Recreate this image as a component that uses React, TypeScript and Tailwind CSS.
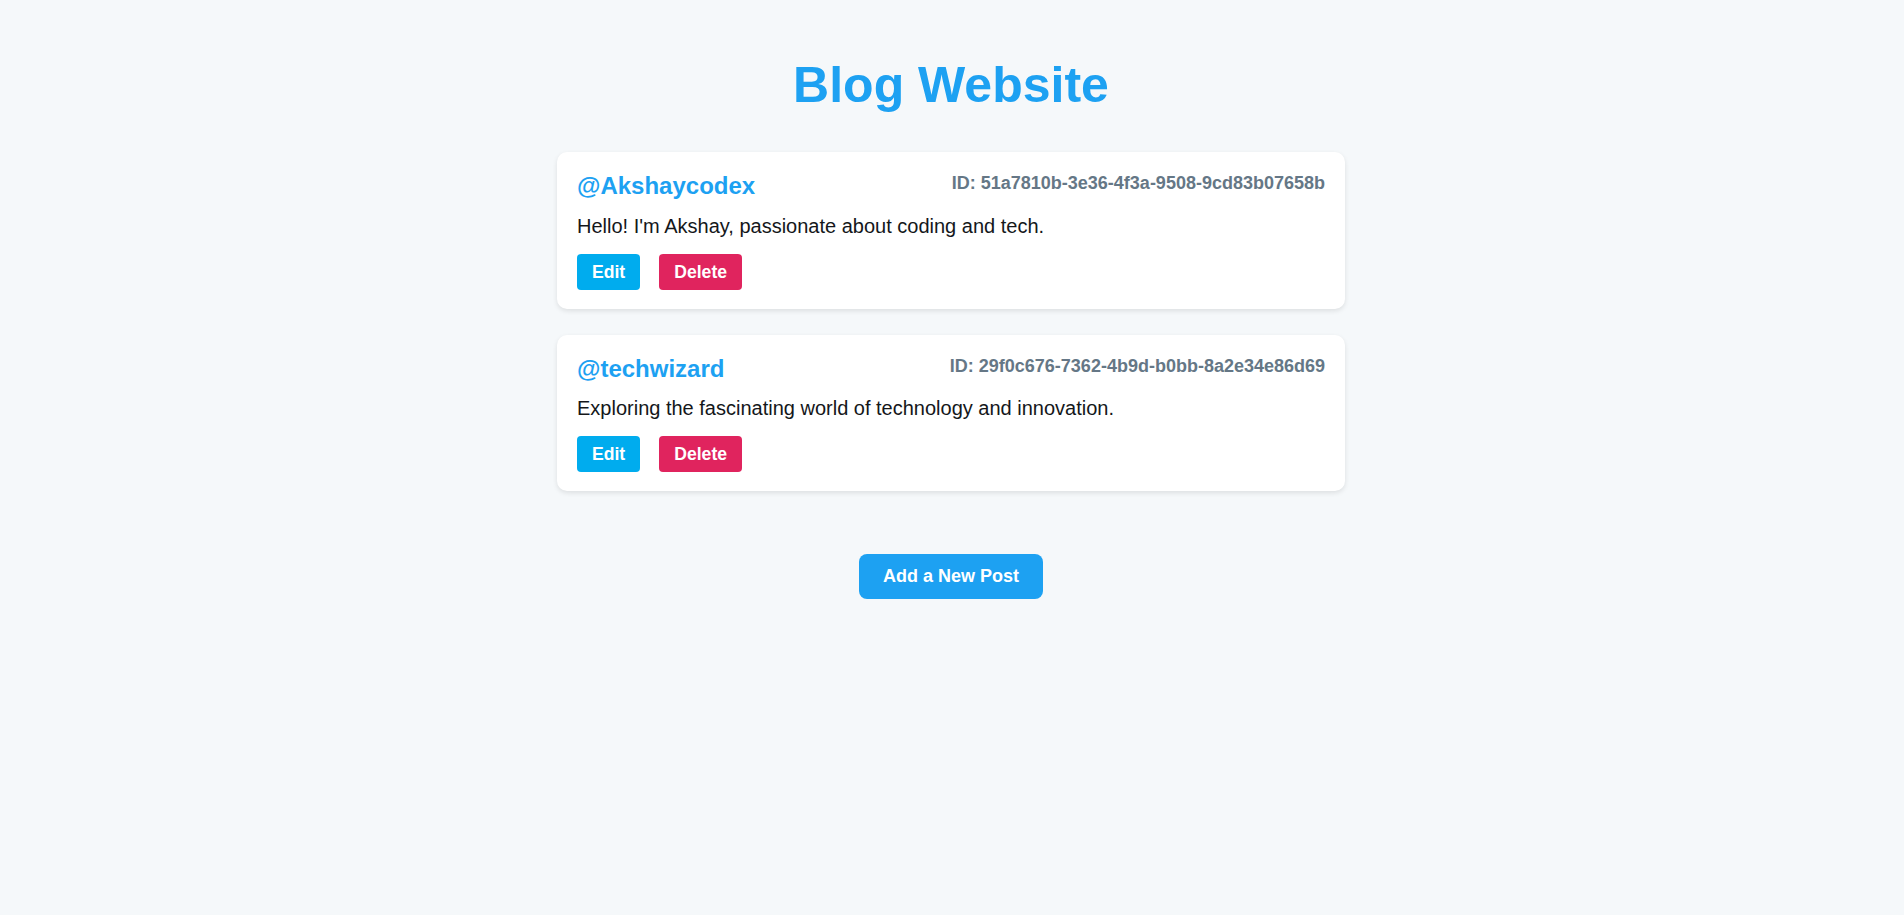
import React from "react"

type Post = {
  id: string
  username: string
  content: string
}

const posts: Post[] = [
  {
    id: "51a7810b-3e36-4f3a-9508-9cd83b07658b",
    username: "Akshaycodex",
    content: "Hello! I'm Akshay, passionate about coding and tech.",
  },
  {
    id: "29f0c676-7362-4b9d-b0bb-8a2e34e86d69",
    username: "techwizard",
    content: "Exploring the fascinating world of technology and innovation.",
  },
]

function PostCard({ post }: { post: Post }) {
  return (
    <div className="bg-white rounded-[10px] shadow-[0_2px_5px_rgba(0,0,0,0.1)] pt-5 pb-[19px] px-5">
      <div className="flex items-start justify-between mb-[15px]">
        <h2 className="text-[24px] leading-[27.6px] font-bold text-[#1da1f2]">@{post.username}</h2>
        <span className="text-[18px] leading-[20.7px] font-bold text-[#657786] mt-[1px]">ID: {post.id}</span>
      </div>
      <p className="text-[20px] leading-[23px] text-[#14171a] mb-[16px]">{post.content}</p>
      <div className="flex gap-[19px]">
        <button className="bg-[#00acee] text-white font-bold text-[17.6px] leading-[20px] px-[15px] py-2 rounded-[4px]">
          Edit
        </button>
        <button className="bg-[#e0245e] text-white font-bold text-[17.6px] leading-[20px] px-[15px] py-2 rounded-[4px]">
          Delete
        </button>
      </div>
    </div>
  )
}

export default function App() {
  return (
    <div className="min-h-screen bg-[#f5f8fa] font-['Liberation_Sans',Arial,sans-serif] pt-[57px] pr-[2px]">
      <h1 className="text-center text-[50px] leading-[56px] font-bold text-[#1da1f2] mb-[39px]">Blog Website</h1>
      <div className="w-[788px] mx-auto flex flex-col gap-[26px]">
        {posts.map((post) => (
          <PostCard key={post.id} post={post} />
        ))}
      </div>
      <div className="flex justify-center mt-[63px]">
        <button className="bg-[#1da1f2] text-white font-bold text-[18px] leading-[21px] px-6 py-3 rounded-[8px]">
          Add a New Post
        </button>
      </div>
    </div>
  )
}
